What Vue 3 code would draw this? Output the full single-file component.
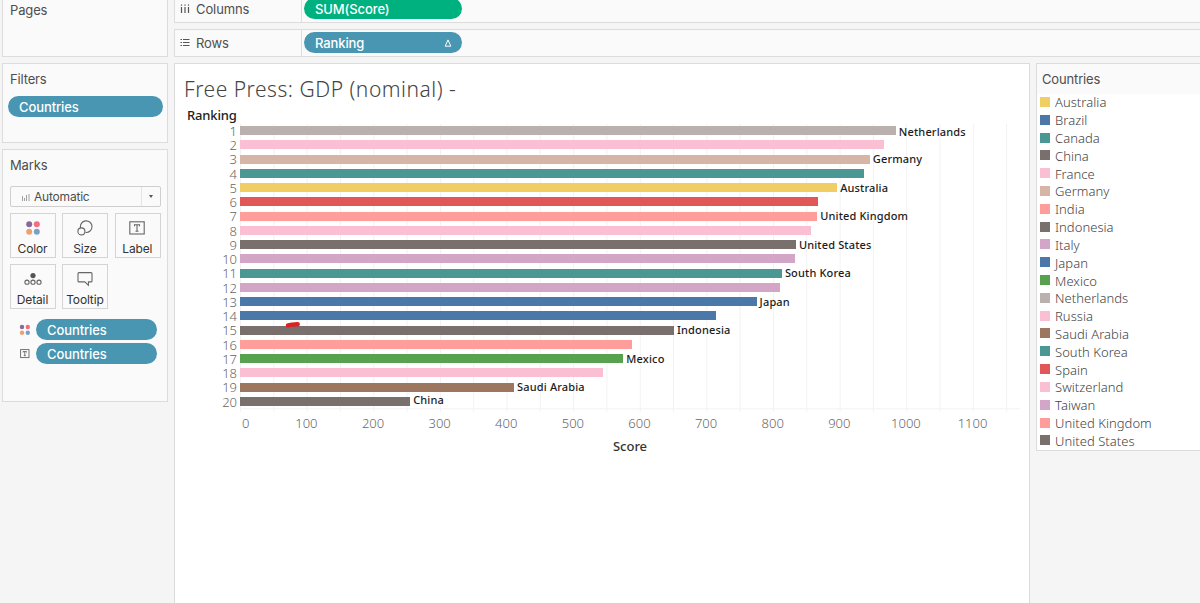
<template>
  <div class="workbook">
    <aside class="side">
      <section class="card pages">
        <h2>Pages</h2>
      </section>

      <section class="card filters">
        <h2>Filters</h2>
        <div class="pill">Countries</div>
      </section>

      <section class="card marks">
        <h2>Marks</h2>
        <div class="mark-type">
          <svg class="bars-icon" width="8" height="8" viewBox="0 0 8 8">
            <path d="M0 3h1v5H0zM2 5h1v3H2zM4 2h1v6H4zM6.5 1h1v7h-1z" />
          </svg>
          <span class="mark-name">Automatic</span>
          <span class="drop"><i></i></span>
        </div>
        <div class="mark-buttons">
          <button>
            <svg width="16" height="16" viewBox="0 0 16 16">
              <circle cx="4.2" cy="4.2" r="3" fill="#85699a" />
              <circle cx="11.8" cy="4.2" r="3" fill="#f0707e" />
              <circle cx="4.2" cy="11.8" r="3" fill="#f0a06e" />
              <circle cx="11.8" cy="11.8" r="3" fill="#7c9fc9" />
            </svg>
            <span>Color</span>
          </button>
          <button>
            <svg class="line" width="16" height="16" viewBox="0 0 16 16">
              <path d="M3.6 8.1A5.8 5.8 0 1 1 8.5 12.4" />
              <circle cx="4.4" cy="11.4" r="3.5" />
            </svg>
            <span>Size</span>
          </button>
          <button>
            <svg class="line" width="16" height="16" viewBox="0 0 16 16">
              <rect x="0.8" y="1.8" width="14.4" height="12.2" />
              <path d="M5.5 6.2V4.7h5v1.5M8 4.7v6.5M6.5 11.3h3" />
            </svg>
            <span>Label</span>
          </button>
          <button>
            <svg class="line" width="18" height="16" viewBox="0 0 18 16">
              <circle cx="9" cy="4.6" r="2.6" class="solid" />
              <circle cx="3" cy="11.2" r="2.1" />
              <circle cx="9" cy="11.2" r="2.1" />
              <circle cx="15" cy="11.2" r="2.1" />
            </svg>
            <span>Detail</span>
          </button>
          <button>
            <svg class="line" width="16" height="16" viewBox="0 0 16 16">
              <path d="M2 1.6h12q1 0 1 1v7.3q0 1-1 1h-2.6v3.4l-3.6-3.4H2q-1 0-1-1V2.6q0-1 1-1z" />
            </svg>
            <span>Tooltip</span>
          </button>
        </div>
        <div class="encoding">
          <svg width="12" height="12" viewBox="0 0 12 12">
            <circle cx="3" cy="3" r="2.2" fill="#85699a" />
            <circle cx="8.8" cy="3" r="2.2" fill="#f0707e" />
            <circle cx="3" cy="8.8" r="2.2" fill="#f0a06e" />
            <circle cx="8.8" cy="8.8" r="2.2" fill="#7c9fc9" />
          </svg>
          <div class="pill">Countries</div>
        </div>
        <div class="encoding">
          <svg class="line thin" width="12" height="12" viewBox="0 0 12 12">
            <rect x="1.6" y="1.6" width="8.4" height="8" />
            <path d="M4 4.4v-.8h3.6v.8M5.8 3.6v4M4.8 7.7h2" />
          </svg>
          <div class="pill">Countries</div>
        </div>
      </section>
    </aside>

    <main class="content">
      <div class="shelf columns">
        <div class="shelf-name">
          <svg class="shelf-icon" width="10" height="10" viewBox="0 0 10 10">
            <path d="M1.5 0.5v1.3M5 0.5v1.3M8.5 0.5v1.3M1.5 3v6M5 3v6M8.5 3v6" />
          </svg>
          Columns
        </div>
        <div class="pill green">SUM(Score)</div>
      </div>
      <div class="shelf">
        <div class="shelf-name">
          <svg class="shelf-icon" width="10" height="10" viewBox="0 0 10 10">
            <path d="M0.5 1.5h1.5M0.5 4.5h1.5M0.5 7.5h1.5M3 1.5h6.5M3 4.5h6.5M3 7.5h6.5" />
          </svg>
          Rows
        </div>
        <div class="pill">
          Ranking
          <svg class="delta" width="8" height="8" viewBox="0 0 8 8">
            <path d="M4 .9 6.8 7.2H1.2z" />
          </svg>
        </div>
      </div>

      <div class="view">
        <section class="sheet">
          <h1>Free Press: GDP (nominal) -</h1>
          <div class="row-title">Ranking</div>
          <div class="chart">
            <div class="ranks">
              <span v-for="(bar, i) in bars" :key="i">{{ i + 1 }}</span>
            </div>
            <div class="plot">
              <svg class="grid" width="780" height="288">
                <line v-for="n in 24" :key="n" :x1="(n - 1) * 33.31 + 0.5" :x2="(n - 1) * 33.31 + 0.5" y1="0" y2="288" />
                <line x1="0" x2="780" y1="284.8" y2="284.8" />
              </svg>
              <div v-for="(bar, i) in bars" :key="i" class="bar-row">
                <div class="bar" :style="{ width: bar.score * 0.6662 + 'px', background: colors[bar.country] }"></div>
                <span v-if="bar.label" class="bar-label">{{ bar.country }}</span>
              </div>
              <svg class="stroke" width="16" height="8" viewBox="0 0 16 8">
                <path d="M3 4.3 7 3.6 12.7 3.2" />
              </svg>
            </div>
          </div>
          <div class="ticks">
            <span v-for="n in 12" :key="n">{{ (n - 1) * 100 }}</span>
          </div>
          <div class="axis-title">Score</div>
        </section>

        <section class="legend">
          <h2>Countries</h2>
          <ul>
            <li v-for="(color, name) in colors" :key="name">
              <i :style="{ background: color }"></i>{{ name }}
            </li>
          </ul>
        </section>
      </div>
    </main>
  </div>
</template>

<script setup>
const colors = {
  Australia: '#f0ce63',
  Brazil: '#4b78a8',
  Canada: '#499893',
  China: '#79706e',
  France: '#fabfd2',
  Germany: '#d7b5a6',
  India: '#ff9d9a',
  Indonesia: '#79706e',
  Italy: '#d3a6c7',
  Japan: '#4b78a8',
  Mexico: '#58a14e',
  Netherlands: '#bab0ad',
  Russia: '#fabfd2',
  'Saudi Arabia': '#9d7660',
  'South Korea': '#499893',
  Spain: '#e15759',
  Switzerland: '#fabfd2',
  Taiwan: '#d3a6c7',
  'United Kingdom': '#ff9d9a',
  'United States': '#79706e'
};

// label: false where the mark label is hidden
const bars = [
  { country: 'Netherlands', score: 984, label: true },
  { country: 'Switzerland', score: 966, label: false },
  { country: 'Germany', score: 945, label: true },
  { country: 'Canada', score: 936, label: false },
  { country: 'Australia', score: 896, label: true },
  { country: 'Spain', score: 867, label: false },
  { country: 'United Kingdom', score: 866, label: true },
  { country: 'France', score: 857, label: false },
  { country: 'United States', score: 834, label: true },
  { country: 'Italy', score: 832, label: false },
  { country: 'South Korea', score: 813, label: true },
  { country: 'Taiwan', score: 810, label: false },
  { country: 'Japan', score: 775, label: true },
  { country: 'Brazil', score: 714, label: false },
  { country: 'Indonesia', score: 651, label: true },
  { country: 'India', score: 588, label: false },
  { country: 'Mexico', score: 575, label: true },
  { country: 'Russia', score: 545, label: false },
  { country: 'Saudi Arabia', score: 411, label: true },
  { country: 'China', score: 255, label: true }
];
</script>

<style>
body {
  margin: 0;
  background: #f5f5f5;
}
</style>

<style scoped>
* {
  box-sizing: border-box;
}

.workbook {
  display: flex;
  gap: 6px;
  width: 1200px;
  height: 603px;
  padding-left: 2px;
  overflow: hidden;
  background: #f5f5f5;
  color: #4e4e4e;
  font-family: Inter, "Liberation Sans", sans-serif;
  font-size: 13px;
}

h1,
h2 {
  margin: 0;
  font-weight: 400;
}

h2 {
  font-size: 13px;
  line-height: 18px;
}

/* Left column */
.side {
  display: flex;
  flex-direction: column;
  gap: 6px;
  width: 166px;
  flex: none;
}

.card {
  border: 1px solid #dcdcdc;
  background: #fafafa;
  padding: 6px 4px 0 7px;
}

.card h2 {
  letter-spacing: -0.15px;
}

.pages {
  height: 57px;
  padding-top: 1px;
  border-top: 0;
}

.filters {
  height: 80px;
}

.filters .pill {
  width: 155px;
  margin: 8px 0 0 -2px;
}

.marks {
  height: 253px;
}

.pill {
  display: flex;
  align-items: center;
  justify-content: space-between;
  height: 21px;
  padding: 0 10.5px 0 11px;
  border-radius: 11px;
  background: #4996b2;
  color: #fff;
  font-size: 13px;
  font-weight: 500;
  letter-spacing: -0.1px;
}

.green {
  background: #00b180;
}

.mark-type {
  display: flex;
  align-items: center;
  width: 151px;
  height: 21px;
  margin-top: 12px;
  padding-left: 11px;
  border: 1px solid #cfcfcf;
  border-radius: 2px;
  font-size: 12px;
  letter-spacing: -0.2px;
}

.bars-icon {
  margin-right: 4px;
  fill: #a0a0a0;
}

.mark-name {
  flex: 1;
}

.drop {
  display: flex;
  align-items: center;
  justify-content: center;
  width: 19px;
  height: 19px;
  border-left: 1px solid #e4e4e4;
}

.drop i {
  border: 2.5px solid transparent;
  border-top: 3px solid #555;
  border-bottom: 0;
}

.mark-buttons {
  display: grid;
  grid-template-columns: repeat(3, 46px);
  grid-auto-rows: 45px;
  gap: 6px 6.4px;
  margin-top: 6px;
}

.mark-buttons button {
  display: flex;
  flex-direction: column;
  align-items: center;
  padding: 6px 1px 0 0;
  border: 1px solid #d4d4d4;
  background: transparent;
  color: #333;
  font-family: inherit;
  font-size: 12px;
  line-height: 16px;
  letter-spacing: -0.15px;
}

.mark-buttons span {
  margin-top: 5px;
}

.line {
  fill: none;
  stroke: #666;
  stroke-width: 1.1;
}

.thin {
  stroke-width: 0.9;
}

.solid {
  fill: #555;
  stroke: none;
}

.encoding {
  display: flex;
  align-items: center;
  gap: 5px;
  margin: 0 0 3px 9px;
}

.mark-buttons + .encoding {
  margin-top: 10px;
}

.encoding .pill {
  width: 121px;
}

/* Shelves */
.content {
  display: flex;
  flex-direction: column;
  gap: 6px;
  flex: 1;
  min-width: 0;
}

.shelf {
  display: flex;
  align-items: center;
  height: 28px;
  border: 1px solid #dcdcdc;
  border-right: 0;
  background: #fafafa;
  flex: none;
}

.columns {
  height: 23px;
  border-top: 0;
}

.columns .shelf-name {
  padding-bottom: 5px;
}

.columns .pill {
  margin-top: -5px;
}

.shelf-name {
  display: flex;
  align-items: center;
  align-self: stretch;
  gap: 6px;
  width: 127px;
  padding-left: 5px;
  border-right: 1px solid #dcdcdc;
  letter-spacing: -0.1px;
}

.shelf-icon {
  fill: none;
  stroke: #555;
  stroke-width: 1.2;
}

.shelf .pill {
  width: 158px;
  margin-left: 2px;
}

.shelf:not(.columns) .pill {
  margin-top: -1px;
}

.delta {
  fill: none;
  stroke: #fff;
}

/* Sheet */
.view {
  display: flex;
  align-items: flex-start;
  gap: 6px;
  flex: 1;
}

.sheet {
  width: 856px;
  height: 541px;
  padding: 11px 0 0 9px;
  border: 1px solid #dcdcdc;
  background: #fff;
  font-family: "Noto Sans", "Open Sans", sans-serif;
}

h1 {
  font-size: 21px;
  font-weight: 300;
  line-height: 28px;
  letter-spacing: 0.52px;
  color: #444;
}

.row-title {
  margin-left: 3px;
  font-size: 13px;
  font-weight: 500;
  line-height: 18px;
  margin-top: 2.5px;
  letter-spacing: -0.15px;
  color: #222;
}

.chart {
  display: flex;
}

.ranks {
  width: 53px;
  padding-top: 0.3px;
  text-align: right;
  font-weight: 300;
  color: #666;
  font-size: 13px;
}

.ranks span {
  display: block;
  height: 14.26px;
  line-height: 14.26px;
}

.plot {
  position: relative;
  width: 780px;
  height: 288px;
  margin-left: 3px;
}

.grid {
  position: absolute;
  left: 0;
  top: 0;
  stroke: #f2f2f2;
}

.bar-row {
  position: relative;
  display: flex;
  align-items: center;
  gap: 3px;
  height: 14.26px;
}

.bar {
  height: 9px;
  margin-left: 0.3px;
}

.bar-label {
  color: #1c1c1c;
  font-size: 11px;
  font-weight: 500;
  line-height: 14px;
  letter-spacing: 0.15px;
}

/* outer labels are pushed inside the pane */
.bar-row:nth-of-type(1) .bar-label {
  padding-top: 3px;
}

.bar-row:nth-of-type(20) .bar-label {
  padding-bottom: 2px;
}

.stroke {
  position: absolute;
  left: 45px;
  top: 197px;
  fill: none;
  stroke: #dd2222;
  stroke-width: 4.4;
  stroke-linecap: round;
}

.ticks {
  display: flex;
  margin: 2.5px 0 0 22.5px;
  font-size: 13px;
  font-weight: 300;
  line-height: 18px;
  color: #666;
}

.ticks span {
  width: 66.62px;
  flex: none;
  text-align: center;
}

.ticks span:first-child {
  padding-left: 12px;
}

.axis-title {
  width: 780px;
  margin: 5px 0 0 56px;
  text-align: center;
  font-size: 13px;
  font-weight: 500;
  line-height: 18px;
  color: #333;
}

/* Legend */
.legend {
  flex: 1;
  height: 388px;
  border: 1px solid #dcdcdc;
  border-right: 0;
  background: #fff;
}

.legend h2 {
  height: 30px;
  padding: 6px 0 0 5px;
  letter-spacing: -0.15px;
  background: #fafafa;
}

.legend ul {
  margin: -0.5px 0 0;
  padding: 0 0 0 3px;
  list-style: none;
  font-family: "Noto Sans", "Open Sans", sans-serif;
  font-size: 13px;
  font-weight: 300;
  letter-spacing: 0.04px;
  color: #444;
}

.legend li {
  display: flex;
  align-items: center;
  gap: 5px;
  height: 17.82px;
  white-space: nowrap;
}

.legend i {
  width: 10px;
  height: 10px;
  margin-top: -1px;
}
</style>
